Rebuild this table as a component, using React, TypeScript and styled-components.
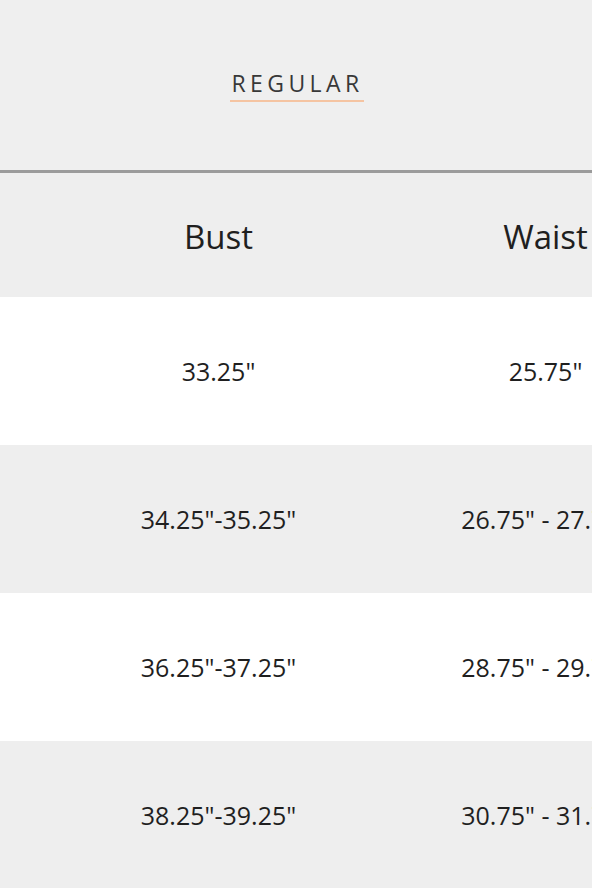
import React from "react";
import styled, { createGlobalStyle } from "styled-components";

const Global = createGlobalStyle`
  html, body { margin: 0; padding: 0; background: #efefef; }
  body { font-family: "Open Sans", "Noto Sans", sans-serif; color: #222; overflow: hidden; }
`;

const Page = styled.div`
  width: 592px;
  height: 888px;
  overflow: hidden;
  background: #efefef;
`;

const TabBar = styled.div`
  display: flex;
  justify-content: center;
  align-items: flex-start;
  border-bottom: 3px solid #9b9b9b;
  box-sizing: border-box;
  height: 173px;
`;

const Tab = styled.div`
  margin-top: 68px;
  margin-left: 2px;
  font-size: 23px;
  letter-spacing: 4.4px;
  font-weight: 500;
  color: #383838;
  padding: 0 0 2px 1px;
  border-bottom: 2px solid #f5c4a2;
  line-height: 30px;
`;

const Table = styled.div`
  width: 1100px;
  margin-left: 55px;
`;

const Row = styled.div<{ $bg: string; $h: number }>`
  display: grid;
  grid-template-columns: 327px 327px 327px;
  height: ${(p) => p.$h}px;
  background: ${(p) => p.$bg};
  margin-left: -55px;
  padding-left: 55px;
  align-items: center;
`;

const HeadCell = styled.div`
  text-align: center;
  font-size: 33px;
  font-weight: 400;
  color: #1f1f1f;
  white-space: nowrap;
  padding-top: 2px;
`;

const Cell = styled.div`
  text-align: center;
  font-size: 25px;
  font-weight: 500;
  color: #1f1f1f;
  white-space: nowrap;
`;

const rows = [
  { bust: '33.25"', waist: '25.75"', hip: '36"', bg: "#ffffff" },
  { bust: '34.25"-35.25"', waist: '26.75" - 27.75"', hip: '37" - 38"', bg: "#eeeeee" },
  { bust: '36.25"-37.25"', waist: '28.75" - 29.75"', hip: '39" - 40"', bg: "#ffffff" },
  { bust: '38.25"-39.25"', waist: '30.75" - 31.75"', hip: '41" - 42"', bg: "#eeeeee" },
];

export default function App() {
  return (
    <Page>
      <Global />
      <TabBar>
        <Tab>REGULAR</Tab>
      </TabBar>
      <Table>
        <Row $bg="#eeeeee" $h={124}>
          <HeadCell>Bust</HeadCell>
          <HeadCell>Waist</HeadCell>
          <HeadCell>Hip</HeadCell>
        </Row>
        {rows.map((r, i) => (
          <Row key={i} $bg={r.bg} $h={148}>
            <Cell>{r.bust}</Cell>
            <Cell>{r.waist}</Cell>
            <Cell>{r.hip}</Cell>
          </Row>
        ))}
      </Table>
    </Page>
  );
}
